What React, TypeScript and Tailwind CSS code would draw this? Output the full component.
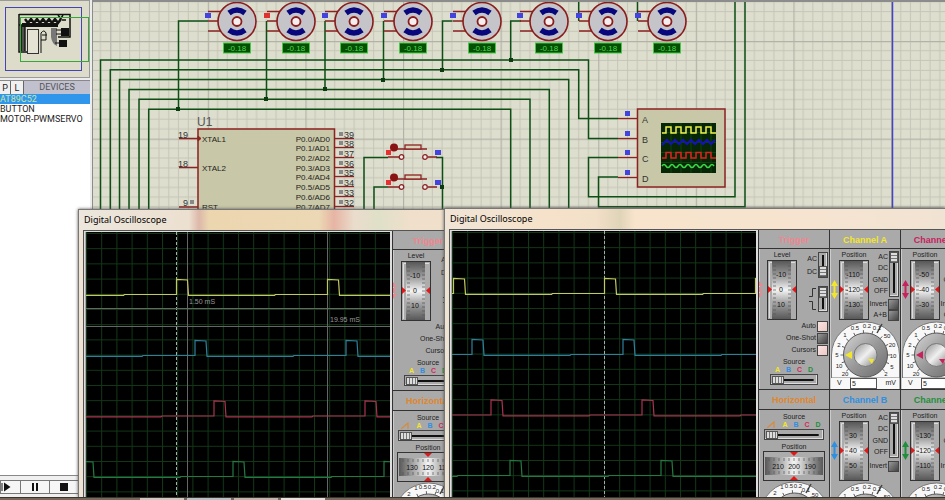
import React from 'react';

type Option = { color: string; label: string };

const SOURCES: Option[] = [
  { label: 'A', color: 'text-[#f2e62a]' },
  { label: 'B', color: 'text-[#2f8fe0]' },
  { label: 'C', color: 'text-[#d42a5c]' },
  { label: 'D', color: 'text-[#1f8f3c]' },
];

const H_SLIDER =
  'block h-[11px] appearance-none border border-[#444] bg-[#aaa] bg-[linear-gradient(#111,#111)] bg-[length:84%_2px] bg-center bg-no-repeat px-px shadow-[inset_-1px_-1px_0_#ddd] [&::-webkit-slider-thumb]:h-[8px] [&::-webkit-slider-thumb]:w-[12px] [&::-webkit-slider-thumb]:appearance-none [&::-webkit-slider-thumb]:border [&::-webkit-slider-thumb]:border-[#555] [&::-webkit-slider-thumb]:bg-[repeating-linear-gradient(90deg,#ddd_0_2px,#777_2px_3px)]';

const V_SLIDER =
  'block w-[10px] appearance-none border border-[#444] bg-[#aaa] bg-[linear-gradient(#111,#111)] bg-[length:2px_84%] bg-center bg-no-repeat py-px shadow-[inset_-1px_-1px_0_#ddd] [writing-mode:vertical-lr] [&::-webkit-slider-thumb]:h-[11px] [&::-webkit-slider-thumb]:w-[8px] [&::-webkit-slider-thumb]:appearance-none [&::-webkit-slider-thumb]:border [&::-webkit-slider-thumb]:border-[#555] [&::-webkit-slider-thumb]:bg-[repeating-linear-gradient(#ddd_0_2px,#777_2px_3px)]';

const SharedDefs: React.FC = () => (
  <svg className="absolute h-0 w-0" aria-hidden="true">
    <defs>
      <linearGradient id="drumV" x1="0" y1="0" x2="0" y2="1">
        <stop offset="0" stopColor="#585858" />
        <stop offset="0.3" stopColor="#a8a8a8" />
        <stop offset="0.5" stopColor="#f4f4f4" />
        <stop offset="0.7" stopColor="#a8a8a8" />
        <stop offset="1" stopColor="#585858" />
      </linearGradient>
      <linearGradient id="drumH" x1="0" y1="0" x2="1" y2="0">
        <stop offset="0" stopColor="#585858" />
        <stop offset="0.25" stopColor="#a8a8a8" />
        <stop offset="0.5" stopColor="#f4f4f4" />
        <stop offset="0.75" stopColor="#a8a8a8" />
        <stop offset="1" stopColor="#585858" />
      </linearGradient>
      <linearGradient id="dialBody" x1="0" y1="0" x2="1" y2="1">
        <stop offset="0" stopColor="#d6d6d6" />
        <stop offset="0.5" stopColor="#989898" />
        <stop offset="1" stopColor="#6a6a6a" />
      </linearGradient>
      <linearGradient id="dialCap" x1="0" y1="0" x2="1" y2="1">
        <stop offset="0" stopColor="#8e8e8e" />
        <stop offset="0.5" stopColor="#f0f0f0" />
        <stop offset="1" stopColor="#7c7c7c" />
      </linearGradient>
      <pattern id="sheet" x="110.2" y="41" width="97.6" height="97.6" patternUnits="userSpaceOnUse">
        <path
          d="M9.8 0V98M19.5 0V98M29.3 0V98M39 0V98M48.8 0V98M58.6 0V98M68.3 0V98M78.1 0V98M87.8 0V98M0 9.8H98M0 19.5H98M0 29.3H98M0 39H98M0 48.8H98M0 58.6H98M0 68.3H98M0 78.1H98M0 87.8H98"
          stroke="#c6c6b8"
          strokeWidth="1"
        />
        <path d="M0.5 0V98M0 0.5H98" stroke="#b2b2a8" strokeWidth="1.4" />
      </pattern>
      <pattern id="scopeGrid" x="0" y="1" width="15.2" height="15.2" patternUnits="userSpaceOnUse">
        <path d="M0.5 0V16M0 0.5H16" stroke="#123818" strokeWidth="1" />
      </pattern>
    </defs>
  </svg>
);

/* ---------- Sidebar ---------- */

const Sidebar: React.FC = () => (
  <aside className="flex w-[90px] shrink-0 flex-col bg-[#ececec] font-[Roboto,sans-serif] text-[9px]">
    <svg className="h-[78px] w-full shrink-0 border-y border-r border-[#9a9a9a] bg-[#dddccb]" aria-label="Sheet overview">
      <rect x="5.5" y="6.5" width="76" height="63" fill="none" stroke="#4444b4" />
      <path d="M19 13.5H70V36H58M19 13V51H27M19 24H58" fill="none" stroke="#111" strokeWidth="1.5" />
      <path d="M21.5 24V50M24.5 24V50" stroke="#222" strokeWidth="2.5" />
      <path d="M22 22H58V26H22z" fill="#111" />
      <path d="M25 18l3 4 3-4 3 4 3-4 3 4 3-4 3 4 3-4 3 4 3-4 3 4 3-4" fill="none" stroke="#111" strokeWidth="2.5" />
      <path d="M58 14l3 4M63 14l-3 5M62 19h4" stroke="#111" strokeWidth="1.5" />
      <rect x="27.5" y="28.5" width="11" height="24" fill="#e4e3d4" stroke="#333" />
      <path d="M41 52V32q3-4 5 0v7M42 34h5M41 39h5" fill="none" stroke="#111" />
      <path d="M51 27h6v18q-5-2-6-9z" fill="#777" />
      <rect x="61" y="27" width="8" height="8" fill="#111" />
      <rect x="59" y="39" width="8" height="7" fill="#111" />
      <path d="M56 29h5M56 33h5M55 42h4" stroke="#111" />
      <rect x="20.5" y="16.5" width="68" height="44" fill="none" stroke="#35a835" />
    </svg>
    <div className="mt-[2px] flex h-[14px] shrink-0 items-stretch border-t border-[#888] bg-[#c0c0cf]">
      <button className="w-[11px] border-r border-[#666] bg-[#f0f0f0] leading-[12px] text-[#222]">P</button>
      <button className="w-[13px] border-r border-[#666] bg-[#f0f0f0] leading-[12px] text-[#222]">L</button>
      <span className="flex-1 text-center leading-[13px] text-[#555]">DEVICES</span>
    </div>
    <ul className="flex-1 bg-white leading-[10px] text-[#222]">
      <li className="bg-[#3096ec] text-[#c8e6a0]">AT89C52</li>
      <li>BUTTON</li>
      <li>MOTOR-PWMSERVO</li>
    </ul>
    <div className="flex h-[22px] shrink-0 items-center border-t border-[#888] bg-[#f0f0f0] pt-px">
      <button aria-label="Step" className="flex h-[14px] w-[21px] items-center border border-[#777] bg-[#f6f6f6]">
        <svg width="12" height="10" viewBox="0 0 12 10">
          <path d="M1 1V9" stroke="#111" />
          <path d="M3 0.5L9.5 5 3 9.5z" fill="#111" />
        </svg>
      </button>
      <button aria-label="Pause" className="flex h-[14px] w-[29px] items-center justify-center border border-l-0 border-[#777] bg-[#f6f6f6]">
        <svg width="8" height="8">
          <path d="M1 0h2v8H1zM5 0h2v8H5z" fill="#111" />
        </svg>
      </button>
      <button aria-label="Stop" className="flex h-[14px] w-[29px] items-center justify-center border border-l-0 border-[#777] bg-[#f6f6f6]">
        <svg width="8" height="8">
          <rect width="8" height="8" fill="#111" />
        </svg>
      </button>
    </div>
  </aside>
);

/* ---------- Schematic ---------- */

const MOTORS = [
  { x: 237, hot: false },
  { x: 296, hot: true },
  { x: 354, hot: false },
  { x: 413, hot: false },
  { x: 482, hot: false },
  { x: 549, hot: false },
  { x: 608, hot: false },
  { x: 667, hot: false },
];

const Motor: React.FC<{ x: number; hot: boolean }> = ({ x, hot }) => (
  <g transform={`translate(${x} 21)`}>
    <path d="M-29 -9.5H-16M-29 0H-18M-29 10H-15" stroke="#8c2222" strokeWidth="1.3" />
    <circle cy="0.5" r="19" fill="#c5c5c9" stroke="#8a1c1c" strokeWidth="1.6" />
    <path d="M-8 -8Q0 -14 8 -8M-8 9Q0 15 8 9" fill="none" stroke="#08087c" strokeWidth="5.5" />
    <circle cy="0.5" r="4.5" fill="#f4eeee" stroke="#8a1c1c" strokeWidth="1.8" />
    <rect x="-32" y="-8" width="6" height="5" fill={hot ? '#e03030' : '#4343e0'} />
    <rect x="-13.5" y="22" width="27" height="10" fill="#045004" stroke="#46c846" />
    <text y="30" textAnchor="middle" fontSize="8" fill="#4fd84f">-0.18</text>
  </g>
);

const PushButton: React.FC<{ y: number }> = ({ y }) => (
  <g transform={`translate(0 ${y})`}>
    <path d="M388 0H399.5M428 0H437M395 -8H427" stroke="#8c2222" strokeWidth="1.3" />
    <rect x="405" y="-12" width="16" height="4" fill="#d8d6bc" stroke="#8c2222" strokeWidth="1.3" />
    <circle cx="401.5" r="2.3" fill="#eee" stroke="#8c2222" strokeWidth="1.3" />
    <circle cx="425" r="2.3" fill="#eee" stroke="#8c2222" strokeWidth="1.3" />
    <circle cx="394" cy="-9.5" r="4" fill="#8a1414" />
    <rect x="386" y="-7" width="5" height="5" fill="#e83030" />
    <rect x="435" y="-7" width="6" height="5" fill="#4343e0" />
  </g>
);

const PIN_ROWS = [139, 148, 158, 168, 177, 187, 197, 207];
const PROBE_ROWS = [118, 138, 157, 177];

const Schematic: React.FC = () => (
  <svg className="h-full min-w-0 flex-1 border-l border-t-2 border-[#8c8c8c] bg-[#dedece] font-['Liberation_Sans',sans-serif]">
    <g transform="translate(-93 -2)">
      <rect x="93" y="0" width="4000" height="2000" fill="url(#sheet)" />
      <path d="M892.5 0V600" stroke="#4444c4" strokeWidth="1.5" />

      {/* wires */}
      <g fill="none" stroke="#0e4f16" strokeWidth="1.5">
        <path d="M100.5 300V60H588.5V138.5H618" />
        <path d="M110.3 300V69.7H578.7V118.5H618" />
        <path d="M119.5 300V79.5H568.7V300" />
        <path d="M129 300V89.5H549.3V300" />
        <path d="M139 300V99.3H530V300" />
        <path d="M148.7 300V109.3H510.7V300" />
        <path d="M208 21H178.5V109M266.5 21V99M325 21V89M383.5 21V80M442.5 70V21H452.5M510.7 60V21H521M578.7 0V21M637.5 0V21" />
        <path d="M618 157.5H588.5V196.7H735V0M618 177H598.5V206.7H745V0" />
        <path d="M388 157.5H364V300M388 187H374V300M436 157.5H442.5V300" />
      </g>
      <g fill="#0a3c10">
        {[[178, 109], [266, 99], [325, 89], [383, 80], [442, 70], [511, 60], [442, 187]].map(([x, y]) => (
          <rect key={`${x}-${y}`} x={x - 2} y={y - 2} width="4" height="4" />
        ))}
      </g>

      {MOTORS.map((m) => (
        <Motor key={m.x} x={m.x} hot={m.hot} />
      ))}

      {/* microcontroller */}
      <text x="197" y="126" fontSize="12" fill="#555">U1</text>
      <rect x="198" y="129" width="136.5" height="200" fill="#c8c7a7" stroke="#8c2222" strokeWidth="1.5" />
      <path d="M198 136l3 2.5-3 2.5z" fill="#8c2222" stroke="#8c2222" />
      <path d="M179 138.5H198M179 167.5H198M179 207H198" stroke="#8c2222" strokeWidth="1.3" />
      <g fontSize="9" fill="#333">
        <text x="178" y="138">19</text>
        <text x="178" y="167">18</text>
        <text x="183" y="206">9</text>
      </g>
      <rect x="190" y="200" width="4" height="4" fill="#888" />
      <g fontSize="8" fill="#222">
        <text x="202" y="142">XTAL1</text>
        <text x="202" y="171">XTAL2</text>
        <text x="202" y="210">RST</text>
      </g>
      {PIN_ROWS.map((y, i) => (
        <g key={y}>
          <path d={`M335 ${y - 0.5}H354`} stroke="#8c2222" strokeWidth="1.3" />
          <rect x="339" y={y - 7} width="4" height="4" fill="#888" />
          <text x="344" y={y - 1} fontSize="9" fill="#333">{39 - i}</text>
          <text x="330" y={y + 3} fontSize="8" fill="#222" textAnchor="end">{`P0.${i}/AD${i}`}</text>
        </g>
      ))}

      <PushButton y={157} />
      <PushButton y={187} />

      {/* oscilloscope part */}
      <rect x="637.5" y="109" width="87.5" height="78" fill="#c8c7a7" stroke="#8c2222" strokeWidth="1.5" />
      {PROBE_ROWS.map((y, i) => (
        <g key={y}>
          <path d={`M618 ${y + 0.5}H637`} stroke="#8c2222" strokeWidth="1.3" />
          <rect x="625" y={y - 7} width="5" height="5" fill="#4343e0" />
          <text x="642" y={y + 5} fontSize="9" fill="#333">{'ABCD'[i]}</text>
        </g>
      ))}
      <rect x="661" y="123" width="55" height="50" fill="#062606" />
      <path d="M661 132.5H716M661 142.5H716M661 152.5H716M661 162.5H716M671 123V173M681 123V173M691 123V173M701 123V173M711 123V173" stroke="#0e420e" />
      <g fill="none" strokeWidth="1.5">
        <path d="M662 133H666V127H671V133H676V127H681V133H686V127H691V133H696V127H701V133H706V127H711V133H716" stroke="#f0f04a" />
        <path d="M662 145l5-5 4 4 4-4 4 4 4-4 4 4 4-4 4 4 4-4 4 4 4-4 4 4 4-4" stroke="#1414b4" strokeWidth="2" />
        <path d="M662 158H666V152.5H671V158H676V152.5H681V158H686V152.5H691V158H696V152.5H701V158H706V152.5H711V158H716" stroke="#e02020" />
        <path d="M662 166q2-3 4 0t4 0 4 0 4 0 4 0 4 0 4 0 4 0 4 0 4 0 4 0 4 0 4 0" stroke="#3cd848" />
      </g>
    </g>
  </svg>
);

/* ---------- Oscilloscope ---------- */

const PERIOD = 151;

// one pulse per period, baseline steps back up between pulses
const trace = (start: number, base: number) => {
  let d = '';
  for (let n = -2; n < 3; n++) {
    const x = start + n * PERIOD;
    d += `${d ? 'L' : 'M'}${x} ${base} L${x} ${base - 15} L${x + 11} ${base - 14.5} L${x + 12} ${base + 0.8} L${x + 98} ${base + 0.8} L${x + 99} ${base} `;
  }
  return d;
};

const TRACES = [
  { color: '#c4c860', shift: 0, base: 62.5 },
  { color: '#2f7f9c', shift: 18.5, base: 123.5 },
  { color: '#a83450', shift: 37.5, base: 184 },
  { color: '#237a40', shift: 56.5, base: 244.5 },
];

const ScopeScreen: React.FC<{ phase: number; cursors?: boolean }> = ({ phase, cursors }) => (
  <svg className="h-full w-[304px] shrink-0 bg-black font-['Liberation_Sans',sans-serif]" aria-label="Waveforms">
    <rect width="100%" height="100%" fill="url(#scopeGrid)" />
    <path d={`M${phase} 0V2000`} stroke="#aaa" strokeDasharray="3 2" />
    {cursors && (
      <g>
        <path d="M101.5 0V2000M241.5 0V2000M0 76.5H304M0 94.5H304" stroke="#666" />
        <text x="103" y="72" fontSize="7" fill="#999">1.50 mS</text>
        <text x="244" y="90" fontSize="7" fill="#999">19.95 mS</text>
      </g>
    )}
    {TRACES.map((t) => (
      <path key={t.color} d={trace(phase + t.shift, t.base)} fill="none" stroke={t.color} strokeWidth="1.2" />
    ))}
  </svg>
);

const Drum: React.FC<{ values: string[]; arrow: string; half?: boolean }> = ({ values, arrow, half }) => (
  <svg width="38" height="61" viewBox="0 0 38 61" className="shrink-0">
    {half ? (
      <path d="M0 22l4 5H0zM0 39l4-5H0zM0 28h2v5H0z" fill={arrow} />
    ) : (
      <path d="M3.5 21l3.500 6H4.500v7H7l-3.500 6L0 34h2.500v-7H0z" fill={arrow} />
    )}
    <rect x="8.5" y="1.5" width="29" height="59" fill="#acacac" stroke="#333" />
    <path d="M10.5 59V3.5H36" fill="none" stroke="#ddd" />
    <rect x="13" y="2" width="19" height="58" fill="url(#drumV)" />
    <path d="M14 7h3M14 11h3M14 15h3M14 19h3M14 23h3M14 27h3M14 31h3M14 35h3M14 39h3M14 43h3M14 47h3M14 51h3M14 55h3M29 7h3M29 11h3M29 15h3M29 19h3M29 23h3M29 27h3M29 31h3M29 35h3M29 39h3M29 43h3M29 47h3M29 51h3M29 55h3" stroke="#555" strokeWidth="0.7" />
    <path d="M9 27l4 3.5L9 34zM37 27l-4 3.5 4 3.5z" fill="#e01818" />
    {values.map((v, i) => (
      <text key={v} x="22" y={18 + i * 15} fontSize="7" textAnchor="middle" fill="#111">{v}</text>
    ))}
  </svg>
);

const WideDrum: React.FC<{ values: string[] }> = ({ values }) => (
  <svg width="62" height="30" viewBox="0 0 62 30" className="shrink-0">
    <rect x="0.5" y="0.5" width="61" height="29" fill="#acacac" stroke="#333" />
    <rect x="2" y="6" width="58" height="18" fill="url(#drumH)" />
    <path d="M6 7v3M11 7v3M16 7v3M21 7v3M26 7v3M31 7v3M36 7v3M41 7v3M46 7v3M51 7v3M56 7v3M6 20v3M11 20v3M16 20v3M21 20v3M26 20v3M31 20v3M36 20v3M41 20v3M46 20v3M51 20v3M56 20v3" stroke="#555" strokeWidth="0.7" />
    <path d="M27 1h8l-4 4zM27 29h8l-4-4z" fill="#e01818" />
    {values.map((v, i) => (
      <text key={v} x={15 + i * 16} y="18" fontSize="7" textAnchor="middle" fill="#111">{v}</text>
    ))}
  </svg>
);

type Mark = [string, number, number];

const GAIN_MARKS: Mark[] = [
  ['20', 14, 55], ['10', 8, 47], ['5', 6, 36], ['2', 8, 26], ['1', 14, 16], ['0.5', 24, 9], ['0.2', 36, 7],
  ['0.1', 46, 9], ['50', 56, 17], ['20', 61, 26], ['10', 62, 37], ['5', 61, 48], ['2', 55, 55],
];

const TIME_MARKS: Mark[] = [
  ['2', 15, 14], ['1', 22, 8], ['0.5', 29, 7], ['0.2', 38, 7], ['0.1', 46, 11], ['50', 55, 16],
];

const Dial: React.FC<{ color: string; marks: Mark[] }> = ({ color, marks }) => (
  <svg width="69" height="57" viewBox="0 0 69 57" className="shrink-0">
    <path d="M0.5 57V34A34 33 0 0 1 68.5 34V57z" fill="#f8f8f8" stroke="#777" />
    <path d="M46 12L51 3" stroke="#444" strokeWidth="1.5" />
    <g stroke="#444" strokeWidth="0.8">
      {[-130, -108, -90, -70, -50, -28, -5, 17, 42, 65, 90, 110, 130].map((a) => (
        <path key={a} d="M34.5 12V9" transform={`rotate(${a} 34.5 34)`} />
      ))}
    </g>
    <circle cx="34.5" cy="34" r="22" fill="url(#dialBody)" stroke="#555" />
    <circle cx="34.5" cy="34" r="11.5" fill="url(#dialCap)" stroke="#777" />
    <path d="M14 34l7-4v8z" fill={color} />
    <path d="M37 38h6l-2 5z" fill={color} />
    {marks.map(([label, x, y]) => (
      <text key={`${label}-${x}`} x={x} y={y} fontSize="6" textAnchor="middle" fill="#222">{label}</text>
    ))}
  </svg>
);

const Toggle: React.FC<{ label: string; on?: boolean }> = ({ label, on }) => (
  <label className="flex h-[12px] items-center justify-end gap-px whitespace-nowrap">
    {label}
    <input
      type="checkbox"
      defaultChecked={on}
      className="h-[11px] w-[11px] appearance-none border border-[#444] bg-linear-to-br from-[#999] to-[#444] checked:from-[#fbe3e0] checked:to-[#eccac6]"
    />
  </label>
);

const Heading: React.FC<{ children: React.ReactNode; className: string; tall?: boolean }> = ({ children, className, tall }) => (
  <h2
    className={`${tall ? 'h-[21px] border-t border-t-[#333] leading-[21px]' : 'h-[19px] leading-[20px]'} shrink-0 border-b border-b-[#333] bg-[#aaaaaa] text-center text-[9px] font-bold ${className}`}
  >
    {children}
  </h2>
);

const SourceSelect: React.FC<{ wide?: boolean }> = ({ wide }) => (
  <div className="flex flex-col items-center">
    <span className="leading-[8px]">Source</span>
    <div className="flex gap-[6px] font-bold leading-[8px]">
      {wide && (
        <svg width="9" height="8" className="shrink-0">
          <path d="M0 7L7 1V7" fill="none" stroke="#d98a3a" strokeWidth="1.2" />
        </svg>
      )}
      {SOURCES.map((s) => (
        <span key={s.label} className={s.color}>{s.label}</span>
      ))}
    </div>
    <input type="range" aria-label="Source" min="0" max="3" defaultValue="0" className={`${H_SLIDER} ${wide ? 'w-[60px]' : 'w-[48px]'}`} />
  </div>
);

const TriggerPanel: React.FC = () => (
  <section className="flex h-[159px] shrink-0 flex-col">
    <Heading className="text-[#f0868f]">Trigger</Heading>
    <div className="flex h-[109px] shrink-0 justify-between pr-px pt-[2px]">
      <div className="flex flex-col">
        <span className="pl-[8px] text-center leading-[8px]">Level</span>
        <Drum values={['-10', '0', '10']} arrow="#f0868f" half />
      </div>
      <div className="-ml-4 flex flex-col items-end">
        <div className="flex gap-px pt-px">
          <div className="flex h-[26px] flex-col justify-around text-right leading-[8px]">
            <span>AC</span>
            <span>DC</span>
          </div>
          <input type="range" aria-label="Trigger coupling" min="0" max="1" defaultValue="1" className={`${V_SLIDER} h-[26px]`} />
        </div>
        <div className="mt-[8px] flex items-center gap-px">
          <svg width="8" height="24">
            <path d="M0 9.5H3.5V1.5H7M0 14.5H3.5V22.5H7" fill="none" stroke="#333" />
          </svg>
          <input type="range" aria-label="Trigger edge" min="0" max="1" defaultValue="0" className={`${V_SLIDER} h-[26px]`} />
        </div>
        <div className="mt-[8px] flex flex-col">
          <Toggle label="Auto" on />
          <Toggle label="One-Shot" />
          <Toggle label="Cursors" on />
        </div>
      </div>
    </div>
    <SourceSelect />
  </section>
);

const HorizontalPanel: React.FC<{ values: string[] }> = ({ values }) => (
  <section className="flex shrink-0 flex-col">
    <Heading className="text-[#e0862c]" tall>Horizontal</Heading>
    <div className="flex flex-col items-center pt-[3px]">
      <SourceSelect wide />
      <span className="pt-[3px] leading-[8px]">Position</span>
      <WideDrum values={values} />
      <Dial color="#e0862c" marks={TIME_MARKS} />
    </div>
  </section>
);

type ChannelProps = { name: string; color: string; text: string; values: string[]; sum?: string; tall?: boolean };

const ChannelPanel: React.FC<ChannelProps> = ({ name, color, text, values, sum, tall }) => (
  <section className={`flex shrink-0 flex-col ${tall ? 'h-[161px]' : 'h-[159px]'}`}>
    <Heading className={text} tall={tall}>{`Channel ${name}`}</Heading>
    <div className="flex h-[72px] shrink-0 justify-between px-px pt-[2px]">
      <div className="flex flex-col">
        <span className="pl-[8px] text-center leading-[8px]">Position</span>
        <Drum values={values} arrow={color} />
      </div>
      <div className="-ml-2 flex flex-col items-end">
        <div className="flex gap-px pb-[2px]">
          <div className="flex h-[46px] flex-col justify-around text-right leading-[8px]">
            <span>AC</span>
            <span>DC</span>
            <span>GND</span>
            <span>OFF</span>
          </div>
          <input type="range" aria-label={`Channel ${name} coupling`} min="0" max="3" defaultValue="0" className={`${V_SLIDER} h-[46px]`} />
        </div>
        <Toggle label="Invert" />
        {sum && <Toggle label={sum} />}
      </div>
    </div>
    <div className="flex flex-col px-px">
      <Dial color={color} marks={GAIN_MARKS} />
      <label className="flex h-[11px] items-center justify-between bg-[#f8f8f8] pl-[6px] pr-[3px]">
        V
        <input type="text" defaultValue="5" className="h-[11px] w-[27px] border border-[#555] bg-white pl-px leading-[9px]" />
        mV
      </label>
    </div>
  </section>
);

type ScopeProps = {
  className: string;
  titleClass: string;
  phase: number;
  horizontal: string[];
  cursors?: boolean;
};

const COLUMN = 'flex w-[71px] shrink-0 flex-col border-r border-[#333] shadow-[inset_1px_0_0_#ccc]';

const OscilloscopeWindow: React.FC<ScopeProps> = ({ className, titleClass, phase, horizontal, cursors }) => (
  <div className={`absolute bottom-0 right-0 flex flex-col overflow-hidden border-l border-t border-[#777] bg-[#efe3d3] pl-[4px] shadow-[0_0_3px_#555] ${className}`}>
    <div className={`-ml-[4px] h-[20px] shrink-0 pl-[5px] font-['Noto_Sans','Open_Sans',sans-serif] text-[9px] leading-[19px] text-black ${titleClass}`}>
      Digital Oscilloscope
    </div>
    <div className="flex min-h-0 flex-1 overflow-hidden border-l border-t border-[#555] bg-[#a8a8a8] font-['Liberation_Sans',sans-serif] text-[7px] text-[#222]">
      <div className="flex shrink-0 border-l border-r-2 border-t border-[#ddd] pl-px">
        <ScopeScreen phase={phase} cursors={cursors} />
      </div>
      <div className={`${COLUMN} w-[72px] border-l`}>
        <TriggerPanel />
        <HorizontalPanel values={horizontal} />
      </div>
      <div className={COLUMN}>
        <ChannelPanel name="A" color="#f2e62a" text="text-[#f2e62a]" values={['-110', '-120', '-130']} sum="A+B" />
        <ChannelPanel name="B" color="#2f8fe0" text="text-[#2f8fe0]" values={['30', '40', '50']} tall />
      </div>
      <div className={COLUMN}>
        <ChannelPanel name="C" color="#c8225c" text="text-[#c8225c]" values={['-50', '-40', '-30']} sum="C+D" />
        <ChannelPanel name="D" color="#1f8f3c" text="text-[#1f8f3c]" values={['-130', '-120', '-110']} tall />
      </div>
    </div>
  </div>
);

const App: React.FC = () => {
  return (
    <div className="flex h-screen w-full flex-col overflow-hidden bg-[#ececec]">
      <SharedDefs />
      <main className="relative flex min-h-0 flex-1 gap-[2px] overflow-hidden">
        <Sidebar />
        <Schematic />
        <OscilloscopeWindow
          className="left-[78px] top-[209px]"
          titleClass="bg-[linear-gradient(90deg,#ece6dc_0,#ece0d0_110px,#dcb8a8_120px,#ecd6b0_130px,#ecd8b4_240px,#e6b4a4_255px,#eadccb_275px,#dfe0c8_300px,#efdfcb_330px)]"
          phase={90.5}
          horizontal={['130', '120', '110']}
          cursors
        />
        <OscilloscopeWindow
          className="left-[444px] top-[208px]"
          titleClass="bg-[linear-gradient(90deg,#f0e4d6_0,#f6e2ca_100px,#f3e0c8_150px,#dfd4b8_175px,#f8e4cc_190px,#f6e4d0_360px,#f1e3d3_100%)]"
          phase={152.5}
          horizontal={['210', '200', '190']}
        />
      </main>
      {/* taskbar edge */}
      <footer className="flex h-[3px] shrink-0 gap-[3px] border-t border-[#3c332c] bg-[#75685c] pl-[140px]">
        <span className="w-[44px] bg-[#cfc8c0]" />
        <span className="w-[44px] bg-[#b8c0c4]" />
        <span className="w-[44px] bg-[#c0b4ac]" />
        <span className="w-[44px] bg-[#e4e2de]" />
      </footer>
    </div>
  );
};

export default App;
